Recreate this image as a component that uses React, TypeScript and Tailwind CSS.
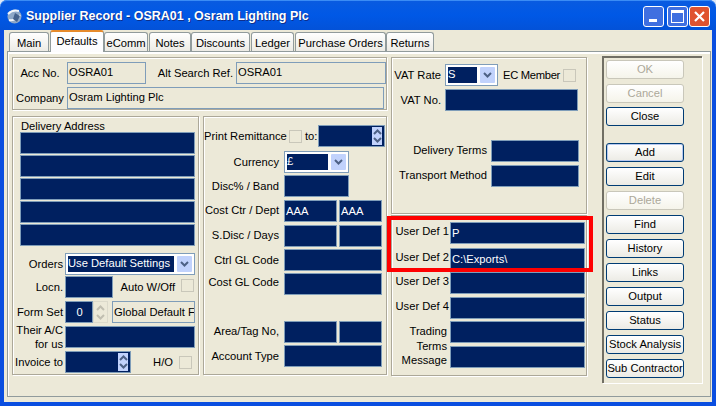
import type { ReactNode } from 'react';

const TABS = [
  { name: 'Main', cls: 'w-[40px] ml-[1px]' },
  { name: 'Defaults', cls: 'w-[54px] ml-[1px]', active: true },
  { name: 'eComm', cls: 'w-[44px]' },
  { name: 'Notes', cls: 'w-[42px] ml-[1px]' },
  { name: 'Discounts', cls: 'w-[59px]' },
  { name: 'Ledger', cls: 'w-[43px] ml-[1px]' },
  { name: 'Purchase Orders', cls: 'w-[91px] ml-[1px]' },
  { name: 'Returns', cls: 'w-[48px]' },
];

const PANEL = 'border border-[#aca899] shadow-[1px_1px_0_#fff,inset_1px_1px_0_#fff]';
const NAVY = 'border border-[#7f9db9] bg-[#002060] text-white';

function Field({ className = '', children }: { className?: string; children?: ReactNode }) {
  return <div className={`${NAVY} h-[22px] shrink-0 pl-[1px] leading-[20px] overflow-hidden whitespace-nowrap ${className}`}>{children}</div>;
}

function Plain({ className = '', children }: { className?: string; children?: ReactNode }) {
  return <div className={`border border-[#7f9db9] h-[22px] shrink-0 pl-[1px] leading-[19px] overflow-hidden whitespace-nowrap ${className}`}>{children}</div>;
}

function Check({ className = '' }: { className?: string }) {
  return <div className={`w-[13px] h-[13px] shrink-0 border border-[#c9c7ba] bg-[#ece9d8] ${className}`} />;
}

function Chevron({ up = false, color = '#4d6185' }: { up?: boolean; color?: string }) {
  return (
    <svg width="9" height="6" viewBox="0 0 9 6" className={up ? 'rotate-180' : ''}>
      <path d="M1 1l3.5 3.5L8 1" fill="none" stroke={color} strokeWidth="2" />
    </svg>
  );
}

function Combo({ className = '', children }: { className?: string; children?: ReactNode }) {
  return (
    <div className={`border border-[#7f9db9] bg-white h-[22px] shrink-0 flex items-center p-[2px] ${className}`}>
      <div className="flex-1 h-[16px] bg-[#002060] text-white leading-[15px] overflow-hidden whitespace-nowrap mr-[3px]">{children}</div>
      <div className="w-[15px] h-[16px] bg-[#c1d2fc] rounded-[1px] flex items-center justify-center"><Chevron /></div>
    </div>
  );
}

function Spin() {
  return (
    <div className="w-[10px] h-[18px] bg-[#c1d2fc] flex flex-col items-center justify-center gap-[2px]">
      <Chevron up />
      <Chevron />
    </div>
  );
}

function Label({ className = '', children }: { className?: string; children: ReactNode }) {
  return <div className={`shrink-0 whitespace-nowrap text-right ${className}`}>{children}</div>;
}

function Btn({ label, off, def, className = '' }: { label: string; off?: boolean; def?: boolean; className?: string }) {
  return (
    <div
      className={`w-[78px] h-[19px] shrink-0 rounded-[3px] border text-center leading-[17px] whitespace-nowrap overflow-hidden bg-gradient-to-b from-white to-[#ecebe5] ${
        off ? 'border-[#c9c7ba] text-[#aca899] from-[#f5f4ea] to-[#f5f4ea]' : 'border-[#003c74] text-black'
      } ${def ? 'shadow-[inset_0_0_0_1px_#b6c8f0]' : ''} ${className}`}
    >
      {label}
    </div>
  );
}

function Globe() {
  return (
    <svg width="17" height="17" viewBox="0 0 17 17" className="shrink-0">
      <circle cx="8.5" cy="8.5" r="7" fill="#8fa8c8" />
      <path d="M2 6c3-3 7-4 11-3M3 12c4 1 8-1 11-5" fill="none" stroke="#f2f6fb" strokeWidth="2" />
      <path d="M9 5l5 3-3 6-4-3z" fill="#44618c" />
    </svg>
  );
}

export default function App() {
  return (
    <div className="relative w-[716px] h-[406px] overflow-hidden bg-[#dfe8f7] text-[11.2px] text-black font-['Liberation_Sans',Arial,sans-serif]">
      {/* Title bar */}
      <div className="h-[30px] rounded-t-[7px] bg-gradient-to-b from-[#0a5be0] via-[#0058e6] to-[#0352d8] shadow-[inset_0_1px_0_#3b8cf5] flex items-center pl-[6px] pr-[6px] pt-[3px]">
        <Globe />
        <div className="ml-[3px] text-white font-bold text-[12.5px] whitespace-nowrap [text-shadow:1px_1px_0_#0f2f8a]">
          Supplier Record - OSRA01 , Osram Lighting Plc
        </div>
        <div className="ml-auto flex gap-[1px]">
          <div className="w-[21px] h-[21px] rounded-[3px] border border-white bg-[#3f6fe0] flex items-end pl-[5px] pb-[4px]">
            <div className="w-[8px] h-[3px] bg-white" />
          </div>
          <div className="w-[21px] h-[21px] rounded-[3px] border border-white bg-[#3f6fe0] flex items-center justify-center ml-[2px]">
            <div className="w-[13px] h-[13px] border border-white border-t-[3px]" />
          </div>
          <div className="w-[21px] h-[21px] rounded-[3px] border border-white bg-[#e0532f] flex items-center justify-center">
            <svg width="13" height="13" viewBox="0 0 13 13">
              <path d="M2 2l9 9M11 2l-9 9" stroke="#fff" strokeWidth="2.2" />
            </svg>
          </div>
        </div>
      </div>

      {/* Window body */}
      <div className="h-[376px] border-x-[4px] border-b-[4px] border-[#0a4ee0] bg-[#ece9d8] pl-[3px] pr-[1px] flex flex-col">
        {/* Tabs */}
        <div className="h-[21px] flex items-end pl-[1px] relative z-10">
          {TABS.map((t) => (
            <div
              key={t.name}
              className={`${t.cls} text-center rounded-t-[3px] border border-b-0 whitespace-nowrap ${
                t.active
                  ? 'h-[22px] border-[#919b9c] border-t-[2px] border-t-[#e68b2c] bg-gradient-to-b from-white to-[#fcfcfe] leading-[18px] relative top-[1px]'
                  : 'h-[19px] border-[#919b9c] bg-gradient-to-b from-white to-[#ecebe5] leading-[20px]'
              }`}
            >
              {t.name}
            </div>
          ))}
        </div>

        {/* Tab page */}
        <div className="h-[346px] border border-[#919b9c] shadow-[inset_1px_1px_0_#fff,inset_0_2px_0_#fff] pl-[4px] pt-[5px] flex">
          <div className="w-[375px] shrink-0">
            {/* Account header */}
            <div className={`${PANEL} h-[53px] pt-[4px]`}>
              <div className="flex items-center">
                <Label className="w-[54px] !text-center">Acc No.</Label>
                <Plain className="w-[79px]">OSRA01</Plain>
                <Label className="w-[87px]">Alt Search Ref.</Label>
                <Plain className="w-[150px] ml-[3px]">OSRA01</Plain>
              </div>
              <div className="flex items-center mt-[3px]">
                <Label className="w-[54px] !text-center">Company</Label>
                <Plain className="w-[317px]">Osram Lighting Plc</Plain>
              </div>
            </div>

            <div className="flex gap-[4px] mt-[6px]">
              {/* Delivery */}
              <div className={`${PANEL} w-[187px] h-[259px] pl-[7px] pt-[4px]`}>
                <div className="h-[11px] leading-[11px] pl-[1px]">Delivery Address</div>
                <div className="flex flex-col gap-[1px] w-[175px]">
                  <Field />
                  <Field />
                  <Field />
                  <Field />
                  <Field />
                </div>
                <div className="-ml-[7px]">
                  <div className="flex items-center mt-[7px]">
                    <Label className="w-[50px]">Orders</Label>
                    <Combo className="w-[130px] ml-[2px]">Use Default Settings</Combo>
                  </div>
                  <div className="flex items-center mt-[1px]">
                    <Label className="w-[50px]">Locn.</Label>
                    <Field className="w-[48px] ml-[2px]" />
                    <Label className="w-[62px]">Auto W/Off</Label>
                    <Check className="ml-[6px] mb-[4px]" />
                  </div>
                  <div className="flex items-center mt-[3px]">
                    <Label className="w-[50px]">Form Set</Label>
                    <Field className="w-[28px] ml-[2px] !text-center">0</Field>
                    <div className="w-[15px] h-[22px] border border-[#dcdacb] flex flex-col items-center justify-center gap-[3px]">
                      <Chevron up color="#c0beb0" />
                      <Chevron color="#c0beb0" />
                    </div>
                    <Plain className="w-[83px] ml-[4px] leading-[20px]">Global Default Form</Plain>
                  </div>
                  <div className="flex items-center mt-[3px] h-[22px]">
                    <Label className="w-[50px] leading-[14px]">
                      Their A/C
                      <br />
                      for us
                    </Label>
                    <Field className="w-[130px] ml-[2px]" />
                  </div>
                  <div className="flex items-center mt-[3px]">
                    <Label className="w-[50px]">Invoice to</Label>
                    <div className={`${NAVY} w-[66px] h-[22px] ml-[2px] flex items-center justify-end pr-[2px]`}>
                      <Spin />
                    </div>
                    <Label className="w-[42px]">H/O</Label>
                    <Check className="ml-[6px]" />
                  </div>
                </div>
              </div>

              {/* Remittance / codes */}
              <div className={`${PANEL} w-[184px] h-[259px] pt-[8px]`}>
                <div className="flex items-center">
                  <Label className="w-[79px]">Print Remittance</Label>
                  <Check className="ml-[6px]" />
                  <div className="ml-[3px] w-[13px]">to:</div>
                  <div className={`${NAVY} w-[67px] h-[22px] flex items-center justify-end pr-[2px]`}>
                    <Spin />
                  </div>
                </div>
                <div className="flex items-center mt-[4px]">
                  <Label className="w-[75px]">Currency</Label>
                  <Combo className="w-[65px] ml-[5px]">£</Combo>
                </div>
                <div className="flex items-center mt-[2px]">
                  <Label className="w-[75px]">Disc% / Band</Label>
                  <Field className="w-[65px] ml-[5px]" />
                </div>
                <div className="flex items-center mt-[3px]">
                  <Label className="w-[75px] mb-[2px]">Cost Ctr / Dept</Label>
                  <Field className="w-[53px] ml-[5px]">AAA</Field>
                  <Field className="w-[43px] ml-[2px]">AAA</Field>
                </div>
                <div className="flex items-center mt-[3px]">
                  <Label className="w-[75px] mb-[2px]">S.Disc / Days</Label>
                  <Field className="w-[53px] ml-[5px]" />
                  <Field className="w-[43px] ml-[2px]" />
                </div>
                <div className="flex items-center mt-[2px]">
                  <Label className="w-[75px]">Ctrl GL Code</Label>
                  <Field className="w-[98px] ml-[5px]" />
                </div>
                <div className="flex items-center mt-[2px]">
                  <Label className="w-[75px] mb-[3px]">Cost GL Code</Label>
                  <Field className="w-[98px] ml-[5px]" />
                </div>
                <div className="flex items-center mt-[26px]">
                  <Label className="w-[75px] mb-[2px]">Area/Tag No,</Label>
                  <Field className="w-[53px] ml-[5px]" />
                  <Field className="w-[43px] ml-[2px]" />
                </div>
                <div className="flex items-center mt-[2px]">
                  <Label className="w-[75px]">Account Type</Label>
                  <Field className="w-[98px] ml-[5px]" />
                </div>
              </div>
            </div>
          </div>

          {/* VAT and user defined */}
          <div className="w-[196px] shrink-0 ml-[4px]">
            <div className={`${PANEL} h-[157px] pt-[6px]`}>
              <div className="flex items-center">
                <Label className="w-[49px]">VAT Rate</Label>
                <Combo className="w-[53px] ml-[4px]">S</Combo>
                <div className="ml-[5px] w-[60px] whitespace-nowrap tracking-[-0.3px]">EC Member</div>
                <Check />
              </div>
              <div className="flex items-center mt-[3px]">
                <Label className="w-[49px]">VAT No.</Label>
                <Field className="w-[133px] ml-[4px]" />
              </div>
              <div className="flex items-center mt-[29px]">
                <Label className="w-[95px] mb-[2px]">Delivery Terms</Label>
                <Field className="w-[88px] ml-[4px]" />
              </div>
              <div className="flex items-center mt-[3px]">
                <Label className="w-[95px] mb-[2px]">Transport Method</Label>
                <Field className="w-[88px] ml-[4px]" />
              </div>
            </div>
            <div className={`${PANEL} h-[161px] mt-[1px] pt-[6px]`}>
              <div className="flex items-center">
                <Label className="w-[57px] mb-[4px]">User Def 1</Label>
                <Field className="w-[135px] ml-[1px]">P</Field>
              </div>
              <div className="flex items-center mt-[4px]">
                <Label className="w-[57px] mb-[4px]">User Def 2</Label>
                <Field className="w-[135px] ml-[1px]">C:\Exports\</Field>
              </div>
              <div className="flex items-center mt-[2px]">
                <Label className="w-[57px] mb-[4px]">User Def 3</Label>
                <Field className="w-[135px] ml-[1px]" />
              </div>
              <div className="flex items-center mt-[3px]">
                <Label className="w-[57px] mb-[4px]">User Def 4</Label>
                <Field className="w-[135px] ml-[1px]" />
              </div>
              <div className="flex mt-[2px]">
                <Label className="w-[55px] leading-[14.5px] pt-[3px]">
                  Trading
                  <br />
                  Terms
                  <br />
                  Message
                </Label>
                <div className="ml-[3px] flex flex-col gap-[3px]">
                  <Field className="w-[135px]" />
                  <Field className="w-[135px]" />
                </div>
              </div>
            </div>
          </div>

          {/* Command buttons */}
          <div className="ml-[15px] w-[100px] h-[327px] -mt-[1px] border-t-2 border-l-2 border-t-[#716f64] border-l-[#716f64] shadow-[1px_1px_0_#fff] pl-[2px] pt-[2px] flex flex-col">
            <Btn label="OK" off />
            <Btn label="Cancel" off className="mt-[5px]" />
            <Btn label="Close" className="mt-[4px]" />
            <Btn label="Add" def className="mt-[17px]" />
            <Btn label="Edit" className="mt-[5px]" />
            <Btn label="Delete" off className="mt-[5px]" />
            <Btn label="Find" className="mt-[5px]" />
            <Btn label="History" className="mt-[5px]" />
            <Btn label="Links" className="mt-[5px]" />
            <Btn label="Output" className="mt-[5px]" />
            <Btn label="Status" className="mt-[5px]" />
            <Btn label="Stock Analysis" className="mt-[5px]" />
            <Btn label="Sub Contractor" className="mt-[5px]" />
          </div>
        </div>
      </div>

      {/* Red highlight drawn over the screenshot */}
      <div className="absolute left-[387px] top-[216px] w-[206px] h-[56px] border-[4px] border-[#ff0000] z-20" />
    </div>
  );
}
